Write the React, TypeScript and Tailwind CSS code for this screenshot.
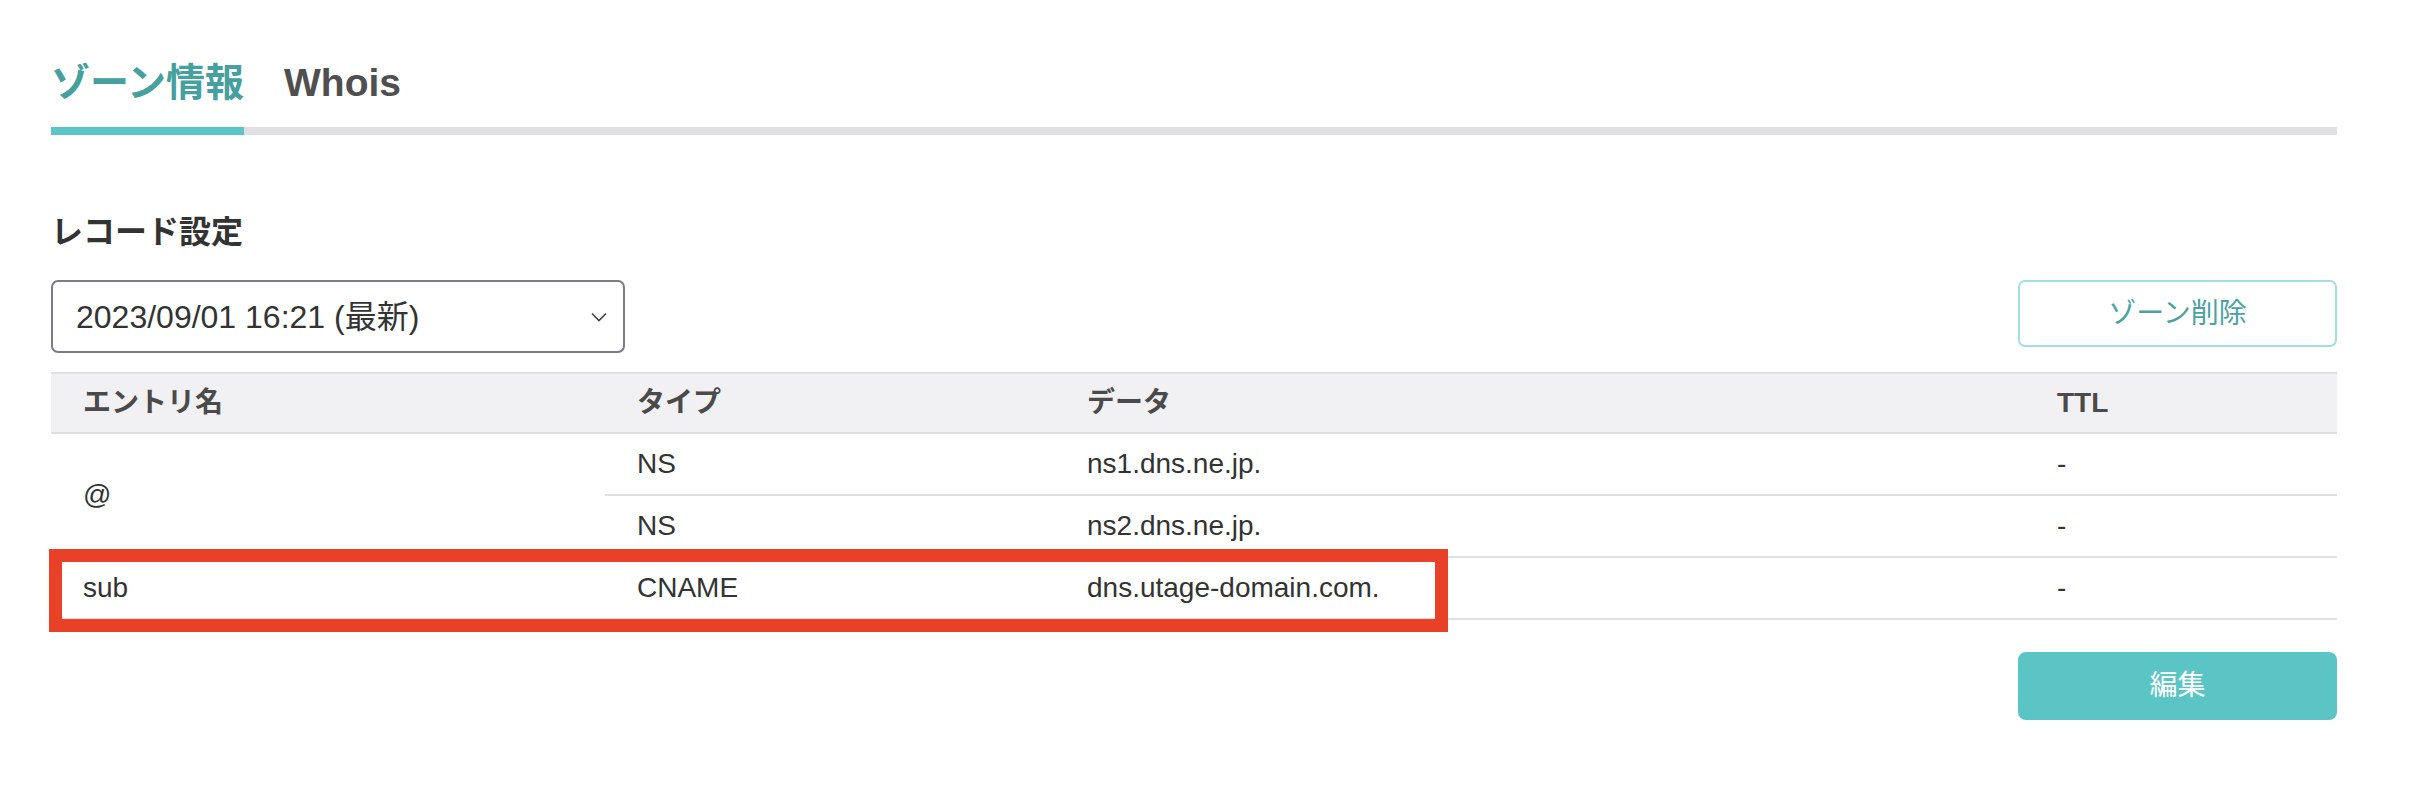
const records = [
  { name: '@', type: 'NS', data: 'ns1.dns.ne.jp.', ttl: '-' },
  { name: '@', type: 'NS', data: 'ns2.dns.ne.jp.', ttl: '-' },
  { name: 'sub', type: 'CNAME', data: 'dns.utage-domain.com.', ttl: '-' },
];

export default function App() {
  return (
    <div className="min-h-screen w-full bg-white font-['Liberation_Sans','Noto_Sans_CJK_JP',sans-serif] text-[#333]">
      <div className="ml-[51px] w-[2286px] pt-[59px]">
        {/* タブ */}
        <div className="flex gap-[40px] border-b-[8px] border-[#e0e0e2]">
          <div className="-mb-[8px] border-b-[8px] border-[#5bc5c6] pb-[21px] text-[39px] font-bold leading-[47px] text-[#45a09e]">
            ゾーン情報
          </div>
          <div className="pb-[21px] text-[39px] font-bold leading-[47px] text-[#4f4f4f]">Whois</div>
        </div>

        {/* レコード設定 */}
        <h2 className="mt-[77px] text-[32px] font-bold leading-[40px] text-[#333]">レコード設定</h2>

        <div className="mt-[28px] flex items-start justify-between">
          <div className="flex h-[73px] w-[574px] items-center justify-between rounded-[7px] border-2 border-[#7b7b8c] pl-[23px] pr-[16px]">
            <span className="text-[32px] text-[#333]">2023/09/01 16:21 (最新)</span>
            <svg width="16" height="10" viewBox="0 0 16 10" fill="none">
              <polyline points="1,1.5 8,8.5 15,1.5" stroke="#444" strokeWidth="1.6" />
            </svg>
          </div>
          <button className="h-[67px] w-[319px] rounded-[7px] border-2 border-[#a2dfe0] bg-white text-[28px] text-[#4aa3a0]">
            ゾーン削除
          </button>
        </div>

        {/* テーブル */}
        <div className="relative mt-[19px]">
          <table className="w-full border-collapse text-left text-[28px] text-[#333]">
            <thead>
              <tr className="h-[60px] border-y-2 border-[#e0e0e2] bg-[#f1f1f3]">
                <th className="w-[554px] pl-[32px] font-bold text-[#4a4a4a]">エントリ名</th>
                <th className="w-[450px] pl-[32px] font-bold text-[#4a4a4a]">タイプ</th>
                <th className="w-[970px] pl-[32px] font-bold text-[#4a4a4a]">データ</th>
                <th className="pl-[32px] font-bold text-[#4a4a4a]">TTL</th>
              </tr>
            </thead>
            <tbody>
              {records.map((r, i) => (
                <tr key={i} className="h-[62px] border-b-2 border-[#e0e0e2]">
                  {i === 0 && (
                    <td rowSpan={2} className="border-b-2 border-[#e0e0e2] pl-[32px] align-middle">
                      {r.name}
                    </td>
                  )}
                  {i === 2 && <td className="pl-[32px]">{r.name}</td>}
                  <td className="pl-[32px]">{r.type}</td>
                  <td className="pl-[32px]">{r.data}</td>
                  <td className="pl-[32px]">{r.ttl}</td>
                </tr>
              ))}
            </tbody>
          </table>

          {/* 注釈の赤枠 */}
          <div className="pointer-events-none absolute left-[-2px] top-[177px] h-[83px] w-[1399px] border-[13px] border-[#e94128]"></div>
        </div>

        <div className="mt-[32px] flex justify-end">
          <button className="h-[68px] w-[319px] rounded-[8px] bg-[#5bc5c6] text-[28px] text-white">編集</button>
        </div>
      </div>
    </div>
  );
}
